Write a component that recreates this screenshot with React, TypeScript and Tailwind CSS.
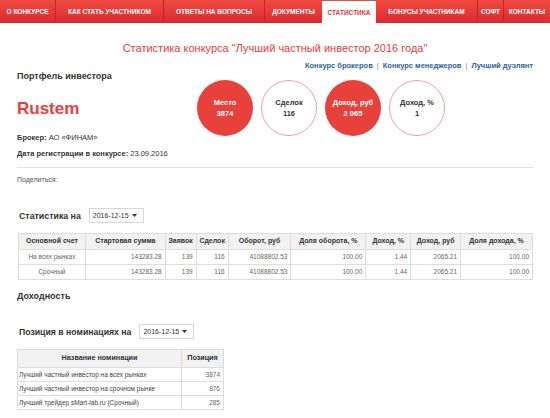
import React from "react";

const navItems: { label: string; w: string; active?: boolean; sep?: boolean }[] = [
  { label: "О КОНКУРСЕ", w: "w-[56px]", sep: true },
  { label: "КАК СТАТЬ УЧАСТНИКОМ", w: "w-[108px]", sep: true },
  { label: "ОТВЕТЫ НА ВОПРОСЫ", w: "w-[101px]", sep: true },
  { label: "ДОКУМЕНТЫ", w: "w-[57px]" },
  { label: "СТАТИСТИКА", w: "w-[54px]", active: true },
  { label: "БОНУСЫ УЧАСТНИКАМ", w: "w-[102px]", sep: true },
  { label: "СОФТ", w: "w-[26px]", sep: true },
  { label: "КОНТАКТЫ", w: "w-[46px]" },
];

const stats = [
  { t: "Место", v: "3874", fill: true },
  { t: "Сделок", v: "116", fill: false },
  { t: "Доход, руб", v: "2 065", fill: true },
  { t: "Доход, %", v: "1", fill: false },
];

const heads = [
  ["Основной счет", "w-[67px]"],
  ["Стартовая сумма", "w-[80px]"],
  ["Заявок", "w-[31px]"],
  ["Сделок", "w-[32px]"],
  ["Оборот, руб", "w-[63px]"],
  ["Доля оборота, %", "w-[75px]"],
  ["Доход, %", "w-[45px]"],
  ["Доход, руб", "w-[50px]"],
  ["Доля дохода, %", "w-[72px]"],
];

const rows = [
  ["На всех рынках", "143283.28", "139", "116", "41088802.53", "100.00", "1.44", "2065.21", "100.00"],
  ["Срочный", "143283.28", "139", "116", "41088802.53", "100.00", "1.44", "2065.21", "100.00"],
];

const noms = [
  ["Лучший частный инвестор на всех рынках", "3874"],
  ["Лучший частный инвестор на срочном рынке", "876"],
  ["Лучший трейдер sMart-lab.ru (Срочный)", "285"],
];

function Select() {
  return (
    <div className="flex h-[15px] w-[55px] shrink-0 items-center justify-between whitespace-nowrap border border-[#d6d6d6] bg-white pl-[3px] pr-[6px] text-[7px] leading-[10px] text-[#333]">
      <span>2016-12-15</span>
      <svg width="5" height="3" viewBox="0 0 5 3"><path d="M0 0h5L2.5 3z" fill="#333" /></svg>
    </div>
  );
}

export default function App() {
  return (
    <div className="h-[418px] w-[550px] overflow-hidden bg-white font-['Liberation_Sans',Arial,sans-serif] text-[#333]">
      {/* nav */}
      <div className="flex h-[23px] bg-gradient-to-b from-[#ee4a40] to-[#e0262e]">
        {navItems.map((n) =>
          n.active ? (
            <div key={n.label} className={`${n.w} mt-[1px] flex shrink-0 items-center justify-center whitespace-nowrap bg-white pt-[2px] text-[6.5px] font-bold text-[#e2363a]`}>
              {n.label}
            </div>
          ) : (
            <div
              key={n.label}
              className={`${n.w} flex shrink-0 items-center justify-center whitespace-nowrap text-[6.5px] font-bold text-white ${n.sep ? "border-r border-[#c62028]" : ""}`}
            >
              {n.label}
            </div>
          )
        )}
      </div>

      <div className="px-[17px]">
        <div className="pt-[18px] text-center text-[11px] leading-[14px] text-[#e8403a]">
          Статистика конкурса "Лучший частный инвестор 2016 года"
        </div>
        <div className="mt-[6px] flex justify-end gap-[4px] text-[7.5px] font-bold leading-[10px] text-[#2f5d99]">
          <span>Конкурс брокеров</span>
          <span className="font-normal text-[#888]">|</span>
          <span>Конкурс менеджеров</span>
          <span className="font-normal text-[#888]">|</span>
          <span>Лучший дуэлянт</span>
        </div>

        <div className="flex">
          <div className="w-[180px]">
            <div className="mt-[-1px] text-[9px] font-bold leading-[12px] text-[#333]">Портфель инвестора</div>
            <div className="mt-[17px] text-[17px] font-bold leading-[20px] text-[#e8403a]">Rustem</div>
          </div>
          <div className="mt-[9px] flex gap-[8px]">
            {stats.map((s) => (
              <div
                key={s.t}
                className={`flex h-[56px] w-[56px] flex-col items-center justify-center rounded-full text-[7.5px] font-bold leading-[11px] ${
                  s.fill ? "bg-[#e8403a] text-white" : "border border-[#f0a0a0] text-[#333]"
                }`}
              >
                <span>{s.t}</span>
                <span>{s.v}</span>
              </div>
            ))}
          </div>
        </div>

        <div className="mt-[-3px] text-[7.5px] leading-[10px]">
          <span className="font-bold">Брокер:</span> АО «ФИНАМ»
        </div>
        <div className="mt-[6px] text-[7.5px] leading-[10px]">
          <span className="font-bold">Дата регистрации в конкурсе:</span> 23.09.2016
        </div>
        <div className="mt-[8px] h-px bg-[#e2e2e2]" />
        <div className="mt-[7px] text-[7px] leading-[10px] text-[#555]">Поделиться:</div>

        <div className="ml-[2px] mt-[23px] flex items-center gap-[8px]">
          <span className="text-[8.8px] font-bold leading-[14px]">Статистика на</span>
          <Select />
        </div>

        <table className="mt-[10px] ml-[1px] border-collapse text-[6.5px]">
          <thead>
            <tr className="h-[16px] bg-[#f2f2f2]">
              {heads.map(([h, w]) => (
                <th key={h} className={`${w} whitespace-nowrap border border-[#ddd] px-[2px] text-center text-[7px] font-bold text-[#333]`}>
                  {h}
                </th>
              ))}
            </tr>
          </thead>
          <tbody>
            {rows.map((r, i) => (
              <tr key={i} className="h-[15px]">
                {r.map((c, j) => (
                  <td key={j} className={`border border-[#ddd] px-[3px] text-[#666] ${j === 0 ? "text-center" : "text-right"}`}>
                    {c}
                  </td>
                ))}
              </tr>
            ))}
          </tbody>
        </table>

        <div className="mt-[10px] text-[9px] font-bold leading-[12px]">Доходность</div>

        <div className="ml-[2px] mt-[22px] flex items-center gap-[8px]">
          <span className="text-[8.7px] font-bold leading-[14px]">Позиция в номинациях на</span>
          <Select />
        </div>

        <table className="mt-[10px] border-collapse text-[6.5px]">
          <thead>
            <tr className="h-[18px] bg-[#f2f2f2]">
              <th className="w-[164px] border border-[#ddd] text-center text-[7.2px] font-bold">Название номинации</th>
              <th className="w-[42px] border border-[#ddd] text-center text-[7.2px] font-bold">Позиция</th>
            </tr>
          </thead>
          <tbody>
            {noms.map(([a, b]) => (
              <tr key={a} className="h-[14px]">
                <td className="border border-[#ddd] px-[1px] text-left text-[#444]">{a}</td>
                <td className="border border-[#ddd] px-[3px] text-right text-[#666]">{b}</td>
              </tr>
            ))}
          </tbody>
        </table>
      </div>
    </div>
  );
}
